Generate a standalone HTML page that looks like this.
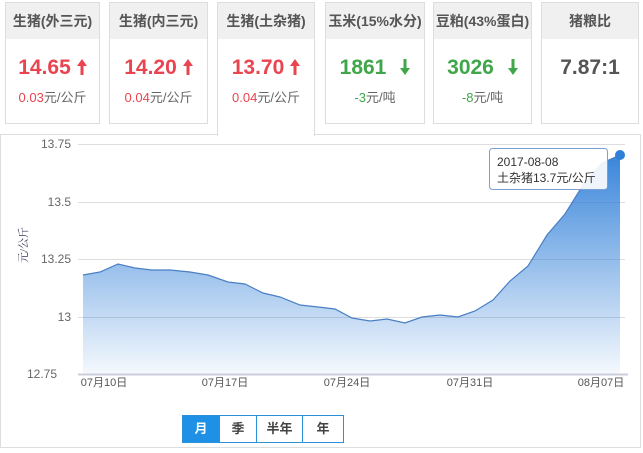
<!DOCTYPE html>
<html><head><meta charset="utf-8"><style>
body{margin:0;width:643px;height:453px;background:#fff;font-family:"Liberation Sans","Noto Sans CJK SC",sans-serif;position:relative;overflow:hidden}
.card{position:absolute;top:2px;height:122px;border:1px solid #ddd;background:#fff;box-sizing:border-box;text-align:center}
.card .h{height:36px;background:#f0f0f0;line-height:36px;font-size:14px;color:#555;font-weight:bold}
.card .v{margin-top:16px;font-size:21px;font-weight:bold;line-height:26px}
.card .v svg{vertical-align:-1px;margin-left:6px}
.card .s{font-size:13px;color:#666;margin-top:6px}
.red{color:#e9444f}.grn{color:#3fa74a}
.panel{position:absolute;left:0;top:134px;width:641px;height:314px;border:1px solid #ddd;box-sizing:border-box}
.btns{position:absolute;left:182px;top:415px;height:26px;border:1px solid #2e8fd9;display:flex;font-size:13px;font-weight:bold;color:#444}
.btns div{line-height:26px;text-align:center;border-left:1px solid #2e8fd9}
.btns div:first-child{border-left:none;background:#1e90e6;color:#fff}
</style></head><body>
<div class="panel"></div>
<div class="card" style="left:5px;width:95px"><div class="h">生猪(外三元)</div><div class="v red">14.65<svg width="10" height="16" viewBox="0 0 10 16"><path d="M5,0 L10,7 L6.5,7 L6.5,16 L3.5,16 L3.5,7 L0,7Z" fill="#e9444f"/></svg></div><div class="s"><span class="red">0.03</span>元/公斤</div></div>
<div class="card" style="left:109px;width:99px"><div class="h">生猪(内三元)</div><div class="v red">14.20<svg width="10" height="16" viewBox="0 0 10 16"><path d="M5,0 L10,7 L6.5,7 L6.5,16 L3.5,16 L3.5,7 L0,7Z" fill="#e9444f"/></svg></div><div class="s"><span class="red">0.04</span>元/公斤</div></div>
<div class="card" style="left:217px;width:98px;height:134px;border-bottom:none"><div class="h">生猪(土杂猪)</div><div class="v red">13.70<svg width="10" height="16" viewBox="0 0 10 16"><path d="M5,0 L10,7 L6.5,7 L6.5,16 L3.5,16 L3.5,7 L0,7Z" fill="#e9444f"/></svg></div><div class="s"><span class="red">0.04</span>元/公斤</div></div>
<div class="card" style="left:325px;width:100px"><div class="h">玉米(15%水分)</div><div class="v grn">1861<svg style="margin-left:14px" width="10" height="16" viewBox="0 0 10 16"><path d="M5,16 L10,9 L6.5,9 L6.5,0 L3.5,0 L3.5,9 L0,9Z" fill="#3fa74a"/></svg></div><div class="s"><span class="grn">-3</span>元/吨</div></div>
<div class="card" style="left:433px;width:99px"><div class="h">豆粕(43%蛋白)</div><div class="v grn">3026<svg style="margin-left:14px" width="10" height="16" viewBox="0 0 10 16"><path d="M5,16 L10,9 L6.5,9 L6.5,0 L3.5,0 L3.5,9 L0,9Z" fill="#3fa74a"/></svg></div><div class="s"><span class="grn">-8</span>元/吨</div></div>
<div class="card" style="left:541px;width:98px"><div class="h">猪粮比</div><div class="v" style="color:#555">7.87:1</div></div>
<svg style="position:absolute;left:0;top:0" width="643" height="453">
<defs><linearGradient id="g" x1="0" y1="0" x2="0" y2="1"><stop offset="0" stop-color="#2f7fd8" stop-opacity=".95"/><stop offset="1" stop-color="#2f7fd8" stop-opacity=".05"/></linearGradient></defs>
<g stroke="#ddd" stroke-width="1"><line x1="78" y1="144.5" x2="625" y2="144.5"/><line x1="78" y1="202.5" x2="625" y2="202.5"/><line x1="78" y1="259.5" x2="625" y2="259.5"/><line x1="78" y1="317.5" x2="625" y2="317.5"/></g>
<path d="M83,275 L100,272 L118,264 L135,268 L152,270 L170,270 L190,272 L208,275 L228,282 L245,284 L263,293 L280,297 L300,305 L318,307 L335,309 L352,318 L370,321 L387,319 L405,323 L422,317 L440,315 L458,317 L475,311 L493,300 L510,281 L528,266 L547,235 L565,214 L583,185 L602,163 L620,155 L620,374 L83,374Z" fill="url(#g)"/>
<path d="M83,275 L100,272 L118,264 L135,268 L152,270 L170,270 L190,272 L208,275 L228,282 L245,284 L263,293 L280,297 L300,305 L318,307 L335,309 L352,318 L370,321 L387,319 L405,323 L422,317 L440,315 L458,317 L475,311 L493,300 L510,281 L528,266 L547,235 L565,214 L583,185 L602,163 L620,155" fill="none" stroke="#4a7fc4" stroke-width="1.2"/>
<line x1="78" y1="374.5" x2="628" y2="374.5" stroke="#ccd" stroke-width="2"/>
<circle cx="620" cy="155" r="5" fill="#2f7fd8"/>
<g font-size="12" fill="#666" text-anchor="end" font-family="Liberation Sans,sans-serif"><text x="71" y="148">13.75</text><text x="71" y="206">13.5</text><text x="71" y="263">13.25</text><text x="71" y="321">13</text><text x="57" y="378">12.75</text></g>
<g font-size="11" fill="#555" text-anchor="middle"><text x="104" y="386">07月10日</text><text x="225" y="386">07月17日</text><text x="347" y="386">07月24日</text><text x="470" y="386">07月31日</text><text x="601" y="386">08月07日</text></g>
<text transform="translate(27,245) rotate(-90)" font-size="11" fill="#335" text-anchor="middle" font-family="Liberation Serif,Noto Serif CJK SC,serif">元/公斤</text>
<rect x="489.5" y="148.5" width="118" height="41" rx="3" fill="#fff" fill-opacity=".9" stroke="#7a9fd0"/>
<text x="497" y="166" font-size="12" fill="#333">2017-08-08</text>
<text x="497" y="182" font-size="12" fill="#333">土杂猪13.7元/公斤</text>
</svg>
<div class="btns"><div style="width:36px">月</div><div style="width:36px">季</div><div style="width:45px">半年</div><div style="width:40px">年</div></div>
</body></html>
